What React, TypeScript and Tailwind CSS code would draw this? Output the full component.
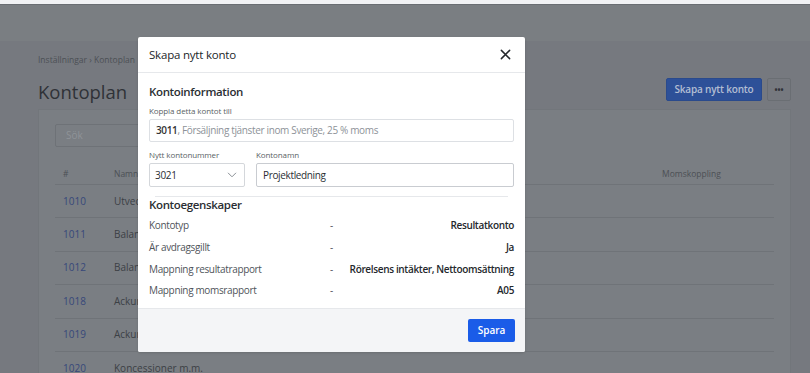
import React from 'react';

const rows = [
  { nr: '1010', name: 'Utvecklingsutgifter' },
  { nr: '1011', name: 'Balanserade utgifter för forskning' },
  { nr: '1012', name: 'Balanserade utgifter för programvaror' },
  { nr: '1018', name: 'Ackumulerade nedskrivningar' },
  { nr: '1019', name: 'Ackumulerade avskrivningar' },
  { nr: '1020', name: 'Koncessioner m.m.' },
];

const props = [
  { label: 'Kontotyp', value: 'Resultatkonto' },
  { label: 'Är avdragsgillt', value: 'Ja' },
  { label: 'Mappning resultatrapport', value: 'Rörelsens intäkter, Nettoomsättning' },
  { label: 'Mappning momsrapport', value: 'A05' },
];

function Background() {
  return (
    <div className="flex h-full flex-col">
      {/* top strip + header, dimmed by the modal backdrop */}
      <div className="h-[4px] shrink-0 bg-[#f1f2f4]" />
      <div className="h-px shrink-0 bg-[#6a6e73]" />
      <div className="h-[36px] shrink-0 bg-[#7a7e82]" />
      <div className="flex min-h-0 flex-1 flex-col bg-[#76797f] pl-[38px] pr-[19px] pt-[13px]">
        <div className="shrink-0 text-[8.5px] leading-[12px] text-[#4c5055]">Inställningar › Kontoplan</div>
        <div className="mt-[12px] flex shrink-0 items-start justify-between">
          <h1 className="text-[18.5px] leading-[28px] text-[#2f3237]">Kontoplan</h1>
          <div className="flex items-center gap-[5px]">
            <div className="flex h-[23px] w-[96px] items-center justify-center rounded-[2px] border border-[#2a4a8c] bg-[#2d5098] text-[10px] font-semibold tracking-[-0.2px] text-[#b3bed3]">
              Skapa nytt konto
            </div>
            <div className="flex h-[23px] w-[24px] items-center justify-center rounded-[2px] border border-[#6a6e73] text-[8px] font-bold leading-none text-[#2f3237]">
              •••
            </div>
          </div>
        </div>
        <div className="mt-[3px] flex-1 border border-[#72767b] bg-[#7a7e83] px-[16px] pt-[14px]">
          <div className="flex h-[23px] w-[200px] items-center rounded-[2px] border border-[#6e7277] px-[10px] text-[10px] text-[#8f9398]">
            Sök
          </div>
          <div className="mt-[20px] flex h-[14px] items-center text-[8.5px] text-[#4c5055]">
            <span className="w-[59px] pl-[8px]">#</span>
            <span className="flex-1">Namn</span>
            <span className="w-[112px]">Momskoppling</span>
          </div>
          <div className="mt-[3px] border-t border-[#6f7378]" />
          {rows.map((r) => (
            <div key={r.nr} className="flex h-[33.4px] items-center border-b border-[#6f7378] text-[10px]">
              <span className="w-[59px] pl-[8px] text-[#37487a]">{r.nr}</span>
              <span className="text-[#3c4045]">{r.name}</span>
            </div>
          ))}
        </div>
      </div>
    </div>
  );
}

function Modal() {
  return (
    <div className="absolute left-[138px] top-[37px] flex w-[387px] flex-col rounded-[2px] bg-white shadow-sm">
      <div className="flex h-[36px] items-center justify-between border-b border-[#e6e8eb] px-[11px]">
        <span className="text-[11.5px] font-medium tracking-[-0.2px] text-[#22262a]">Skapa nytt konto</span>
        <svg className="mr-[3px] h-[11px] w-[11px]" viewBox="0 0 12 12" fill="none" stroke="#24282c" strokeWidth={1.6} strokeLinecap="round">
          <path d="M1.5 1.5l9 9M10.5 1.5l-9 9" />
        </svg>
      </div>
      <div className="px-[11px] pt-[9px] pb-[6px]">
        <h2 className="text-[11.5px] font-semibold leading-[20px] tracking-[-0.35px] text-[#2a2e33]">Kontoinformation</h2>
        <div className="mt-[3px] text-[8px] leading-[12px] tracking-[-0.1px] text-[#5a5f65]">Koppla detta kontot till</div>
        <div className="mt-[2px] flex h-[23px] items-center rounded-[2px] border border-[#dde0e4] px-[6px] text-[10px] tracking-[-0.35px]">
          <span className="font-semibold text-[#333]">3011</span>
          <span className="text-[#8d9298]">, Försäljning tjänster inom Sverige, 25 % moms</span>
        </div>
        <div className="mt-[7px] flex gap-[11px]">
          <div className="flex w-[96px] flex-col">
            <span className="text-[8px] leading-[12px] tracking-[-0.1px] text-[#5a5f65]">Nytt kontonummer</span>
            <div className="mt-[2px] flex h-[24px] items-center justify-between rounded-[2px] border border-[#d4d7db] px-[5px] text-[10px] tracking-[-0.3px] text-[#2a2e33]">
              <span>3021</span>
              <svg className="mr-[2px] h-[6px] w-[10px]" viewBox="0 0 10 6" fill="none" stroke="#8a8f95" strokeWidth={1}>
                <path d="M1 0.8l4 4 4-4" />
              </svg>
            </div>
          </div>
          <div className="flex flex-1 flex-col">
            <span className="text-[8px] leading-[12px] tracking-[-0.1px] text-[#5a5f65]">Kontonamn</span>
            <div className="mt-[2px] flex h-[24px] items-center rounded-[2px] border border-[#c9ccd1] px-[6px] text-[10px] tracking-[-0.35px] text-[#2a2e33]">
              Projektledning
            </div>
          </div>
        </div>
        <div className="mx-[6px] mt-[9px] border-t border-[#e6e8eb]" />
        <h2 className="text-[11.5px] font-semibold leading-[15px] tracking-[-0.35px] text-[#2a2e33]">Kontoegenskaper</h2>
        <div className="mt-[3px] flex flex-col">
          {props.map((p) => (
            <div key={p.label} className="grid h-[21.7px] grid-cols-[1fr_auto_1fr] items-center text-[10px] tracking-[-0.35px]">
              <span className="whitespace-nowrap text-[#4f545a]">{p.label}</span>
              <span className="text-[#4f545a]">-</span>
              <span className="justify-self-end whitespace-nowrap font-semibold text-[#24282c]">{p.value}</span>
            </div>
          ))}
        </div>
      </div>
      <div className="flex h-[44px] items-center justify-end rounded-b-[2px] border-t border-[#e6e8eb] bg-[#f4f5f7] px-[10px]">
        <button className="flex h-[23px] w-[47px] items-center justify-center rounded-[2px] bg-[#1a5ce8] text-[10px] font-semibold text-white">
          Spara
        </button>
      </div>
    </div>
  );
}

export default function App() {
  return (
    <div className="relative h-[373px] w-[810px] overflow-hidden font-['Open_Sans',sans-serif]">
      <Background />
      <Modal />
    </div>
  );
}
